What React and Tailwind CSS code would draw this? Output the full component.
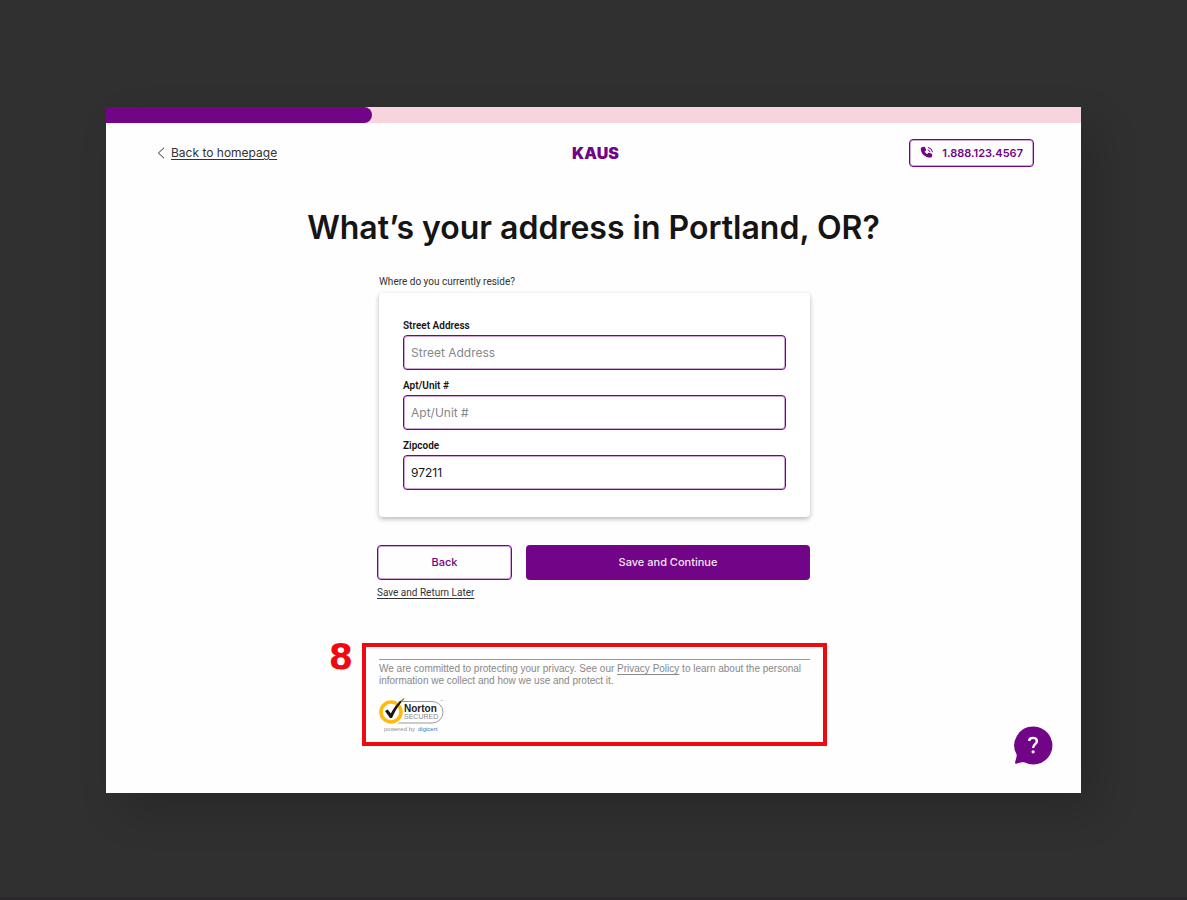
import { useState } from 'react'
import clsx from 'clsx'

const FIELDS = [
  { id: 'street', label: 'Street Address', autoComplete: 'address-line1' },
  { id: 'unit', label: 'Apt/Unit #', autoComplete: 'address-line2' },
  { id: 'zip', label: 'Zipcode', autoComplete: 'postal-code' },
]

const OUTLINE = 'rounded border border-[#720487] ring-1 ring-inset ring-[#720487]/35'

const ChevronIcon = () => (
  <svg viewBox="0 0 8 12" className="w-2 h-3" fill="none" stroke="#333333" aria-hidden="true">
    <path d="M7 .8 1.4 6 7 11.2" />
  </svg>
)

const PhoneIcon = () => (
  <svg viewBox="0 0 14 14" className="w-[14px] h-[14px]" fill="none" aria-hidden="true">
    <path
      d="M2.600 1 4 .7c.5-.1 1 .2 1.200.7l.8 2c.2.500.1 1-.3 1.300l-1 .8c.5 1.200 1.400 2.100 2.600 2.600l.8-1c.3-.4.8-.5 1.300-.3l2.200.9c.5.200.8.7.7 1.200l-.4 1.700c-.1.600-.6 1-1.200 1C5.200 11.700.800 7.700.800 3c0-1 .8-1.800 1.800-2Z"
      fill="#720487"
    />
    <path d="M8 3.800a2.600 2.600 0 0 1 2 2" stroke="#720487" strokeWidth="1" strokeLinecap="round" />
    <path d="M8.300 1.500a5 5 0 0 1 4.200 4.300" stroke="#720487" strokeWidth="1" strokeLinecap="round" />
  </svg>
)

const NortonSeal = () => (
  <svg
    viewBox="0 0 68 38"
    className="w-[68px] h-[38px]"
    role="img"
    aria-label="Norton Secured, powered by digicert"
    fontFamily="'Liberation Sans', sans-serif"
  >
    <rect x="8" y="3.500" width="56" height="21.500" rx="10.750" fill="#ffffff" stroke="#9a9a9a" />
    <circle cx="12" cy="14" r="13" fill="#ffffff" />
    <circle cx="12" cy="14" r="10" fill="#ffffff" stroke="#fdbb11" strokeWidth="3.600" />
    <path d="m6 13 2.800-1.400 3 3.900C14.500 10 18.500 4.500 24.500.500l.7.7C20 6.500 16.500 12 13 20h-2Z" fill="#151515" />
    <path d="m21.500 2.800 3.600-2.800.5.600-2.900 3.600Z" fill="#b99a4b" />
    <text x="25" y="13.500" fontSize="10" fontWeight="700" fill="#222222">Norton</text>
    <text x="25" y="21" fontSize="7" fill="#888888">SECURED</text>
    <text x="61" y="4" fontSize="3" fill="#888888">™</text>
    <text x="5" y="33" fontSize="6" fill="#909090">powered by</text>
    <text x="39" y="33" fontSize="6" fill="#1c86c8">digicert</text>
  </svg>
)

const HelpButton = () => (
  <button type="button" aria-label="Help" className="absolute right-7 bottom-7 w-[39px] h-[39px] cursor-pointer">
    <svg viewBox="0 0 39 39" className="w-full h-full" aria-hidden="true">
      <path
        d="M19.500.500a19 19 0 1 1-8.600 36c-2.700-.6-5 .2-8.500 1.200-.9.200-1.500-.5-1.300-1.300.5-2.400 1.500-5 1.700-7.400A19 19 0 0 1 19.500.500Z"
        fill="#720487"
      />
      <path d="M15.200 15.100c0-2.100 1.700-3.200 3.800-3.200s3.900 1.200 3.900 3.300c0 3-3.800 3-3.800 6.700" fill="none" stroke="#ffffff" strokeWidth="2.400" />
      <circle cx="19.100" cy="25.800" r="1.600" fill="#ffffff" />
    </svg>
  </button>
)

const Header = () => (
  <header className="grid grid-cols-3 items-center pl-[51px] pr-[47px] pt-4">
    <a href="#home" className="flex items-center gap-[6px] text-[12px] leading-4 text-[#333333] justify-self-start">
      <ChevronIcon />
      <span className="underline underline-offset-2">Back to homepage</span>
    </a>
    <p className="justify-self-center text-[16px] leading-5 font-black text-[#720487]">KAUS</p>
    <a
      href="tel:18881234567"
      className={clsx('justify-self-end flex items-center gap-2 h-7 px-[10px] text-[11px] font-semibold text-[#720487]', OUTLINE)}
    >
      <PhoneIcon />
      1.888.123.4567
    </a>
  </header>
)

const AddressForm = () => {
  const [values, setValues] = useState({ street: '', unit: '', zip: '97211' })

  const handleChange = (e) => {
    const { name, value } = e.target
    setValues(v => ({ ...v, [name]: value }))
  }

  return (
    <form onSubmit={e => e.preventDefault()}>
      <p className="pl-[2px] font-['Roboto',sans-serif] text-[10px] leading-[18px] text-[#333333]">
        Where do you currently reside?
      </p>

      <div className="ml-[2px] mt-[2px] flex flex-col gap-[7px] px-6 pt-6 pb-[27px] rounded bg-white shadow-[0_2px_5px_rgba(0,0,0,0.28)]">
        {FIELDS.map(({ id, label, autoComplete }) => (
          <div key={id} className="flex flex-col">
            <label htmlFor={id} className="font-['Roboto',sans-serif] text-[10px] leading-[18px] font-semibold text-[#151515]">
              {label}
            </label>
            <input
              id={id}
              name={id}
              type="text"
              autoComplete={autoComplete}
              placeholder={label}
              value={values[id]}
              onChange={handleChange}
              className={clsx(
                'w-full h-[35px] px-[7px] bg-white text-[12px] text-[#151515] placeholder:text-[#878787]',
                OUTLINE
              )}
            />
          </div>
        ))}
      </div>

      <div className="flex gap-[14px] mt-7 text-[11px] font-medium">
        <button type="button" className={clsx('w-[135px] h-[35px] text-[#720487] cursor-pointer', OUTLINE)}>
          Back
        </button>
        <button type="submit" className="flex-1 h-[35px] rounded bg-[#720487] text-[#f3e3f5] cursor-pointer">
          Save and Continue
        </button>
      </div>

      <a
        href="#later"
        className="block w-fit mt-1 font-['Roboto',sans-serif] text-[10px] leading-[18px] text-[#333333] underline underline-offset-2"
      >
        Save and Return Later
      </a>
    </form>
  )
}

/** Privacy note, framed and numbered as a callout. */
const PrivacyCallout = ({ number }) => (
  <section className="relative border-4 border-[#ee0a0f] px-[13px] pt-3 pb-[6px]">
    <span className="absolute right-full top-0 mr-[13px] -mt-2 font-['DejaVu_Sans',sans-serif] text-[35px] leading-9 font-bold text-[#ee0a0f]">
      {number}
    </span>
    <div className="border-t border-[#999999] pt-[3px]">
      <p className="font-['Liberation_Sans',sans-serif] text-[10px] leading-3 text-[#888888]">
        We are committed to protecting your privacy. See our{' '}
        <a href="#privacy" className="underline underline-offset-2">Privacy Policy</a> to learn about the personal
        information we collect and how we use and protect it.
      </p>
      <div className="mt-[11px]">
        <NortonSeal />
      </div>
    </div>
  </section>
)

const App = () => (
  <div className="min-h-screen bg-[#303030] px-[106px] pt-[107px] pb-[104px] border-b-3 border-[#2a282a] font-['Inter','Liberation_Sans',sans-serif]">
    <main className="relative bg-[#fefefe] pb-[47px] shadow-[16px_18px_40px_rgba(0,0,0,0.16)]">
      <div className="h-4 bg-[#f7d4de]" role="progressbar" aria-label="Progress" aria-valuenow={27}>
        <div className="h-full w-[27.3%] rounded-r-full bg-[#720487]" />
      </div>

      <Header />

      <h1 className="mt-[41px] text-center text-[32px] leading-10 font-semibold text-[#151515]">
        What’s your address in Portland, OR?
      </h1>

      <div className="w-full max-w-[433px] mx-auto mt-[25px]">
        <AddressForm />
      </div>

      <div className="w-full max-w-[467px] mx-auto mt-[41px] pl-[2px]">
        <PrivacyCallout number={8} />
      </div>

      <HelpButton />
    </main>
  </div>
)

export default App
